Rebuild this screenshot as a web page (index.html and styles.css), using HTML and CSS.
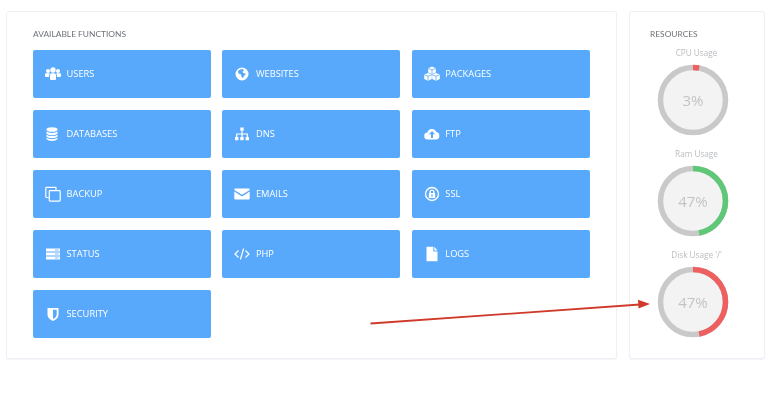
FILE: index.html
```html
<!DOCTYPE html>
<html lang="en">
<head>
<meta charset="utf-8">
<title>Dashboard</title>
<link rel="stylesheet" href="styles.css">
</head>
<body>
<main class="page">
  <section class="panel functions">
    <h2 class="title">AVAILABLE FUNCTIONS</h2>
    <div class="grid">
      <a class="tile"><svg class="ico" viewBox="0 0 16 16"><circle cx="3" cy="5" r="2"/><circle cx="13" cy="5" r="2"/><circle cx="8" cy="4" r="2.700"/><path d="M0 8.200q0-1 1-1h3q.6 0 1 .4-1 1-1 2.600V11H1q-1 0-1-1zM16 8.200q0-1-1-1h-3q-.6 0-1 .4 1 1 1 2.600V11h3q1 0 1-1zM5 9q0-1.800 1.800-1.800h2.400Q11 7.200 11 9v4q0 1-1 1H6q-1 0-1-1z"/></svg><span>USERS</span></a>
      <a class="tile"><svg class="ico" viewBox="0 0 16 16"><path fill-rule="evenodd" d="M8 1.500a6.500 6.500 0 1 1 0 13 6.500 6.500 0 0 1 0-13zM6 3.500 4 5l.5 2.500L7 8.500l.5 2.500L9 12l1-2 2-2-2.500-1-1-1.500L10 4.500 8.500 3z"/></svg><span>WEBSITES</span></a>
      <a class="tile"><svg class="ico" viewBox="0 0 16 16"><path d="M8 .6l3.800 1.600v4.300L8 8.100 4.200 6.500V2.200zM4 6.900l3.800 1.600v4.400L4 14.700.2 12.900V8.500zM12 6.900l3.800 1.600v4.400L12 14.700l-3.800-1.800V8.500z"/><path class="cut" d="M4.400 2.500 8 4l3.600-1.500M8 4v3.600M.4 8.800 4 10.300l3.600-1.500M4 10.300v4M8.400 8.800 12 10.300l3.600-1.500M12 10.300v4"/></svg><span>PACKAGES</span></a>

      <a class="tile"><svg class="ico" viewBox="0 0 16 16"><ellipse cx="7" cy="3.500" rx="5.500" ry="2.300"/><path d="M1.500 5.300Q3 7 7 7t5.500-1.700v2.200Q11 9.200 7 9.200T1.500 7.500zM1.500 8.400q1.500 1.700 5.500 1.700t5.500-1.700v2.200q-1.500 1.700-5.500 1.700t-5.500-1.700zM1.500 11.500q1.500 1.700 5.500 1.700t5.500-1.700v1.500Q11 15 7 15t-5.500-2z"/></svg><span>DATABASES</span></a>
      <a class="tile"><svg class="ico" viewBox="0 0 16 16"><path d="M6.300 1.500h3.400v3.300H6.300zM1 11h3.400v3.300H1zM6.300 11h3.400v3.300H6.300zM11.600 11H15v3.300h-3.400z"/><path class="line" d="M8 4.800V11M2.700 11V8h10.600v3"/></svg><span>DNS</span></a>
      <a class="tile"><svg class="ico" viewBox="0 0 16 16"><path fill-rule="evenodd" d="M4 13.500a3.500 3.500 0 0 1-.6-7A4.700 4.700 0 0 1 12.300 6a3.800 3.800 0 0 1-.3 7.500zM8 5 5 8.300h2V12h2V8.300h2z"/></svg><span>FTP</span></a>

      <a class="tile"><svg class="ico" viewBox="0 0 16 16"><path class="line" d="M3.800 11.500H1.500q-.7 0-.7-.7V2q0-.7.7-.7h8.800q.7 0 .7.7v2.300"/><rect class="line" x="4.300" y="4.600" width="10.900" height="10.500" rx=".8"/></svg><span>BACKUP</span></a>
      <a class="tile"><svg class="ico" viewBox="0 0 16 16"><path d="M1.300 2.500h13.400q1 0 1 1v.4L8 8.800.3 3.900v-.4q0-1 1-1zM.3 5.500 8 10.400l7.700-4.900v7q0 1-1 1H1.300q-1 0-1-1z"/></svg><span>EMAILS</span></a>
      <a class="tile"><svg class="ico" viewBox="0 0 16 16"><path fill-rule="evenodd" d="M8 .8a7.200 7.200 0 1 1 0 14.400A7.200 7.200 0 0 1 8 .8zm0 1.400a5.800 5.800 0 1 0 0 11.600A5.800 5.800 0 0 0 8 2.200zM8 3.500a2.500 2.500 0 0 1 2.500 2.500v1h.7v5H4.800V7h.7V6A2.500 2.500 0 0 1 8 3.500zM8 4.800A1.200 1.200 0 0 0 6.800 6v1h2.400V6A1.200 1.200 0 0 0 8 4.800zM7.300 8.500v2h1.400v-2z"/></svg><span>SSL</span></a>

      <a class="tile"><svg class="ico" viewBox="0 0 16 16"><path d="M1 2.500h14v3H1zM1 6.500h14v3H1zM1 10.500h14v3H1z"/><path class="cut" d="M10 4h3.500M10 8h3.500M10 12h3.500"/></svg><span>STATUS</span></a>
      <a class="tile"><svg class="ico" viewBox="0 0 16 16"><path class="line" d="M4.500 4.500 1 8l3.500 3.500M11.500 4.500 15 8l-3.500 3.500M9.600 2.500 6.400 13.500"/></svg><span>PHP</span></a>
      <a class="tile"><svg class="ico" viewBox="0 0 16 16"><path d="M2.500.8h6.800v4.600h4.200v9.800h-11zM10.300.8l3.200 3.600h-3.200z"/></svg><span>LOGS</span></a>

      <a class="tile"><svg class="ico" viewBox="0 0 16 16"><path fill-rule="evenodd" d="M2.500 2h11v6.500q0 4.200-5.500 6.500-5.500-2.300-5.500-6.500zM8 3.800v9.200q3.700-1.800 3.700-4.500V3.800z"/></svg><span>SECURITY</span></a>
    </div>
  </section>

  <aside class="panel resources">
    <h2 class="title">RESOURCES</h2>
    <div class="gauge">
      <p class="label">CPU Usage</p>
      <svg class="dial" viewBox="0 0 72 72"><circle class="face" cx="36" cy="36" r="32.500"/><circle class="arc red" cx="36" cy="36" r="32.500" pathLength="100" stroke-dasharray="3 97" transform="rotate(-90 36 36)"/><text x="36" y="42">3%</text></svg>
    </div>
    <div class="gauge">
      <p class="label">Ram Usage</p>
      <svg class="dial" viewBox="0 0 72 72"><circle class="face" cx="36" cy="36" r="32.500"/><circle class="arc green" cx="36" cy="36" r="32.500" pathLength="100" stroke-dasharray="47 53" transform="rotate(-90 36 36)"/><text x="36" y="42">47%</text></svg>
    </div>
    <div class="gauge">
      <p class="label">Disk Usage '/'</p>
      <svg class="dial" viewBox="0 0 72 72"><circle class="face" cx="36" cy="36" r="32.500"/><circle class="arc red" cx="36" cy="36" r="32.500" pathLength="100" stroke-dasharray="47 53" transform="rotate(-90 36 36)"/><text x="36" y="42">47%</text></svg>
    </div>
  </aside>
</main>
<svg class="arrow" viewBox="0 0 300 40" aria-hidden="true"><path class="shaft" d="M10.500 33.500 L280 14.500"/><path class="head" d="M278 9.800 L290 14 L278.500 18.500 Z"/></svg>
</body>
</html>
```
FILE: styles.css
```css
* { box-sizing: border-box; }
html, body { margin: 0; height: 100%; }
body {
  width: 768px;
  height: 412px;
  background: #fff;
  font-family: "Open Sans", "Liberation Sans", sans-serif;
  position: relative;
  overflow: hidden;
}
.page {
  display: flex;
  gap: 12px;
  padding: 11px 3px 0 6px;
  height: 359px;
  filter: blur(.45px);
}
.panel {
  background: #fff;
  border: 1px solid #edf1f6;
  border-radius: 3px;
  box-shadow: 0 1px 1px rgba(200, 210, 225, .25);
}
.functions {
  width: 611px;
  padding: 14.500px 26px 0;
}
.resources {
  width: 136px;
  padding: 14.500px 0 0 20px;
}
.title {
  margin: 0;
  font-family: Lato, "Open Sans", sans-serif;
  font-size: 8.400px;
  line-height: 14px;
  font-weight: 400;
  color: #6d7178;
  white-space: nowrap;
}
.grid {
  display: grid;
  grid-template-columns: repeat(3, 178px);
  grid-auto-rows: 48px;
  column-gap: 11.400px;
  row-gap: 12px;
  margin-top: 9px;
}
.tile {
  display: flex;
  align-items: center;
  background: #58a9fb;
  border-radius: 2px;
  color: #fff;
  padding-left: 12px;
  font-size: 9.300px;
  gap: 5.500px;
}
.ico {
  width: 16px;
  height: 16px;
  flex: none;
  fill: #fff;
}
.ico .line { fill: none; stroke: #fff; stroke-width: 1.200; }
.ico .cut { fill: none; stroke: #58a9fb; stroke-width: .8; }
.gauge {
  display: flex;
  flex-direction: column;
  align-items: center;
  width: 84px;
  margin-left: 1px;
  margin-top: 11px;
}
.resources .title + .gauge { margin-top: 5px; }
.label {
  margin: 0 0 4px;
  padding-left: 7px;
  font-size: 8.200px;
  line-height: 14px;
  color: #b9bcc0;
  white-space: nowrap;
}
.dial { width: 72px; height: 72px; display: block; }
.dial .face { fill: #f3f3f3; stroke: #c9c9c9; stroke-width: 5.500; }
.dial .arc { fill: none; stroke-width: 5.500; }
.dial .red { stroke: #ee5f5f; }
.dial .green { stroke: #5fc878; }
.dial text {
  font-family: "Open Sans", sans-serif;
  font-size: 15px;
  fill: #c4c4c4;
  text-anchor: middle;
}
.arrow {
  position: absolute;
  left: 360px;
  top: 290px;
  width: 300px;
  height: 40px;
}
.shaft { stroke: #cf3a2a; stroke-width: 1.800; fill: none; }
.head { fill: #cf3a2a; }
```
